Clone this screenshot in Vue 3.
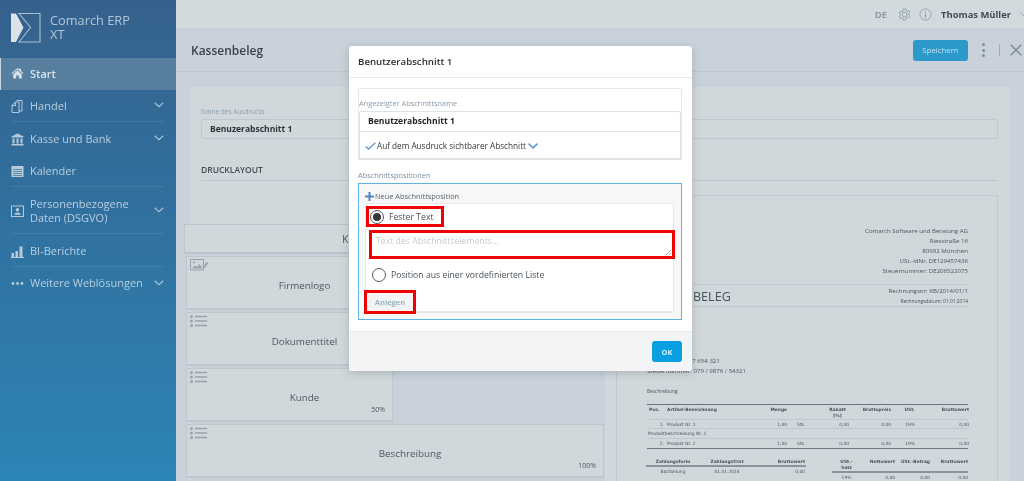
<script setup>
const nav = [
  { label: 'Handel', icon: 'copy', chev: true, h: 32 },
  { label: 'Kasse und Bank', icon: 'bank', chev: true, h: 33, low: true, nosep: true },
  { label: 'Kalender', icon: 'cal', h: 32 },
  { label: 'Personenbezogene Daten (DSGVO)', icon: 'person', chev: true, h: 47, low: true },
  { label: 'BI-Berichte', icon: 'bars', h: 33, low: true },
  { label: 'Weitere Weblösungen', icon: 'dots', chev: true, h: 33, nosep: true }
]
const blocks = [
  { t: 'Firmenlogo', icon: 'image', half: true },
  { t: 'Dokumenttitel', icon: 'list', half: true },
  { t: 'Kunde', icon: 'list', half: true, pct: '50%' },
  { t: 'Beschreibung', icon: 'list', pct: '100%' }
]
const addr = ['Comarch Software und Beratung AG', 'Riesstraße 16', '80992 München', 'USt.-IdNr. DE129457436', 'Steuernummer: DE206522075']
const buyer = ['Kunde Muster:', 'Musterort Land', 'Telefon: 0898777 654 321', 'Steuernummer: 079 / 9876 / 54321']
const head = ['Pos.', 'Artikel-Bezeichnung', 'Menge', '', 'Rabatt [%]', 'Bruttopreis', 'USt.', 'Bruttowert']
const row1 = ['1.', 'Produkt Nr. 1', '1,00', 'Stk.', '0,00', '0,00', '19%', '0,00']
const row2 = ['2.', 'Produkt Nr. 2', '1,00', 'Stk.', '0,00', '0,00', '19%', '0,00']
</script>

<template>
  <div class="app">
    <aside class="side">
      <div class="brand">
        <svg class="logo" width="30" height="30" viewBox="0 0 30 30" fill="none">
          <path d="M0 .5h5l7.500 14L5 29H0z" fill="#dbe3e8" />
          <path d="M7 .5h22V29H7M8 .5l11.500 14L8 29" stroke="#a9bfd0" stroke-width="1.100" />
        </svg>
        <div class="brand-name">Comarch ERP<br />XT</div>
      </div>
      <div class="start">
        <svg width="13" height="12" viewBox="0 0 13 12"><path d="M6.500 1 .5 6.200l.7.8L6.500 2.500 11.800 7l.7-.8L10 4V1.500H8.500v1.200zM2.200 7.200V11.500h3V8.500h2.600v3h3V7.200L6.500 3.600z" fill="#d5e0e8" /></svg>
        <span>Start</span>
      </div>
      <div v-for="n in nav" :key="n.label" class="nav" :class="{ low: n.low }" :style="{ height: n.h + 'px' }">
        <svg width="13" height="13" viewBox="0 0 13 13" fill="none" class="nav-ic">
          <g v-if="n.icon === 'copy'" stroke="#b7cbda"><path d="M1 5.500 4.500 2H8v10.500H1zM4.500 2v3.500H1" /><path d="M5.500.5H11V11H8" /></g>
          <path v-else-if="n.icon === 'bank'" d="M6.500.5.500 3.500V4.500h12V3.500zM1.500 5.500h2v5h-2zM5.500 5.500h2v5h-2zM9.500 5.500h2v5h-2zM.5 11h12v1.500H.5z" fill="#b7cbda" />
          <g v-else-if="n.icon === 'cal'"><rect x=".5" y="1" width="12" height="11" fill="#b7cbda" /><path d="M2 4.500h9M2 6.500h9M2 8.500h9M2 10.500h9" stroke="#3a6f98" stroke-width=".7" /></g>
          <g v-else-if="n.icon === 'person'"><rect x=".5" y="1" width="12" height="10.500" stroke="#b7cbda" /><circle cx="6.500" cy="4.800" r="1.700" fill="#b7cbda" /><path d="M3.500 9.800c0-3 6-3 6 0z" fill="#b7cbda" /></g>
          <path v-else-if="n.icon === 'bars'" d="M.5 8h2.500v4H.5zM4.500 6H7v6H4.500zM8.500 1.500h3v10.500h-3zM0 12h13v1H0z" fill="#b7cbda" />
          <g v-else fill="#b7cbda"><circle cx="2" cy="6.500" r="1.400" /><circle cx="6.500" cy="6.500" r="1.400" /><circle cx="11" cy="6.500" r="1.400" /></g>
        </svg>
        <span class="nav-t">{{ n.label }}</span>
        <svg v-if="n.chev" class="chev" width="10" height="6" viewBox="0 0 10 6" fill="none"><path d="M.7.8 5 4.800 9.300.8" stroke="#a9c1d3" stroke-width="1.200" /></svg>
        <i v-if="!n.nosep" class="sep"></i>
      </div>
    </aside>

    <main class="main">
      <header class="top">
        <b class="lang">DE</b>
        <svg class="gear" width="13" height="13" viewBox="0 0 14 14" fill="none" stroke="#8ea0ae"><path d="M5.800 1h2.400l.4 1.700 1.500.7 1.500-.8 1.200 2-1.300 1.200v1.600l1.300 1.200-1.200 2-1.500-.8-1.500.7L8.200 13H5.800l-.4-1.700-1.500-.7-1.500.8-1.200-2 1.300-1.200V6.600L1.200 5.400l1.200-2 1.500.8 1.500-.7z" /><circle cx="7" cy="7" r="2.600" /></svg>
        <svg class="info" width="13" height="13" viewBox="0 0 14 14" fill="none"><circle cx="7" cy="7" r="6" stroke="#8ea0ae" /><path d="M7 6v4.500M7 3.500v1.300" stroke="#8ea0ae" stroke-width="1.200" /></svg>
        <b class="user">Thomas Müller</b>
        <svg class="user-chev" width="8" height="5" viewBox="0 0 8 5" fill="none"><path d="M.5.5 4 4 7.500.5" stroke="#8ea0ae" /></svg>
      </header>
      <section class="title">
        <h1>Kassenbeleg</h1>
        <span class="save">Speichern</span>
        <span class="kebab"><i></i><i></i><i></i></span>
        <i class="vr"></i>
        <svg width="12" height="12" viewBox="0 0 12 12" fill="none"><path d="M.7.7l10.600 10.600M11.300.7.7 11.300" stroke="#7f8d98" stroke-width="1.500" /></svg>
      </section>
      <section class="card">
        <label class="lbl">Name des Ausdrucks</label>
        <div class="name">Benuzerabschnitt 1</div>
        <div class="dl">DRUCKLAYOUT</div>
        <div class="canvas">
          <div class="blocks">
            <div class="bhead">Kopf der Druckvorlage</div>
            <div class="bgrid">
              <div v-for="b in blocks" :key="b.t" class="block" :class="{ half: b.half }">
                <svg v-if="b.icon === 'image'" class="bic" width="19" height="12" viewBox="0 0 19 12" fill="none"><rect x=".5" y=".5" width="13" height="10.500" stroke="#98a4ac" /><circle cx="4" cy="3.500" r="1" fill="#98a4ac" /><path d="M2 9.500l3-3 2 1.500 2.500-3 3 4.500z" fill="#98a4ac" /><path d="M13 8l4-5 1.500 1-4 5-2 .5z" fill="#98a4ac" /></svg>
                <svg v-else class="bic" width="17" height="12" viewBox="0 0 17 12" fill="#98a4ac"><circle cx="1.500" cy="1.500" r="1.500" /><circle cx="1.500" cy="6" r="1.500" /><circle cx="1.500" cy="10.500" r="1.500" /><path d="M5 .8h12v1.400H5zM5 5.300h12v1.400H5zM5 9.800h12v1.400H5z" /></svg>
                <span>{{ b.t }}</span>
                <small v-if="b.pct">{{ b.pct }}</small>
              </div>
            </div>
          </div>
          <div class="preview">
            <div class="addr"><div v-for="a in addr" :key="a">{{ a }}</div></div>
            <div class="doc">
              <div class="doc-t">KASSENBELEG</div>
              <div class="doc-r"><div>Rechnungsnr: KB/2014/01/1</div><small>Rechnungsdatum: 01.01.2014</small></div>
            </div>
            <div class="buyer"><div v-for="b in buyer" :key="b">{{ b }}</div></div>
            <div class="besch">Beschreibung</div>
            <div class="tbl">
              <div class="tr th"><span v-for="(h, i) in head" :key="i">{{ h }}</span></div>
              <div class="tr"><span v-for="(c, i) in row1" :key="i">{{ c }}</span></div>
              <div class="tr pd">Produktbeschreibung Nr. 1</div>
              <div class="tr"><span v-for="(c, i) in row2" :key="i">{{ c }}</span></div>
            </div>
            <div class="foot">
              <div class="ft1">
                <div class="fh"><span>Zahlungsform</span><span>Zahlungsfrist</span><span>Bruttowert</span></div>
                <div class="fr"><span>Barzahlung</span><span>01.01.2014</span><span>0,00</span></div>
              </div>
              <div class="ft2">
                <div class="fh"><span>USt.-<br />Satz</span><span>Nettowert</span><span>USt.-Betrag</span><span>Bruttowert</span></div>
                <div class="fr"><span>19%</span><span>0,00</span><span>0,00</span><span>0,00</span></div>
              </div>
            </div>
          </div>
        </div>
      </section>
    </main>

    <div class="modal">
      <div class="m-head">Benutzerabschnitt 1</div>
      <div class="m-body">
        <div class="m-box">
          <div class="m-lbl">Angezeigter Abschnittsname</div>
          <div class="m-input">Benutzerabschnitt 1</div>
          <div class="m-check">
            <svg width="11" height="8" viewBox="0 0 11 8" fill="none"><path d="M.7 4.500 3.500 7 10.300.7" stroke="#5d9ad0" stroke-width="1.300" /></svg>
            <span>Auf dem Ausdruck sichtbarer Abschnitt</span>
            <svg width="10" height="6" viewBox="0 0 10 6" fill="none"><path d="M.5.7 5 4.800 9.500.7" stroke="#5d9ad0" stroke-width="1.600" /></svg>
          </div>
        </div>
        <div class="m-lbl2">Abschnittspositionen</div>
        <div class="m-pos">
          <div class="m-new">
            <svg width="9" height="9" viewBox="0 0 9 9"><path d="M3.500 0h2v3.500H9v2H5.500V9h-2V5.500H0v-2h3.500z" fill="#4f86bd" /></svg>
            <span>Neue Abschnittsposition</span>
          </div>
          <div class="m-form">
            <div class="radio-row first mark">
              <span class="radio on"></span><span>Fester Text</span>
            </div>
            <div class="area mark"><span>Text des Abschnittselements...</span>
              <svg class="grip" width="5" height="5" viewBox="0 0 5 5"><path d="M0 5 5 0M3 5l2-2" stroke="#999" stroke-width=".8" /></svg>
            </div>
            <div class="radio-row second">
              <span class="radio"></span><span>Position aus einer vordefinierten Liste</span>
            </div>
            <div class="anlegen mark">Anlegen</div>
          </div>
        </div>
      </div>
      <div class="m-foot"><span class="ok">OK</span></div>
    </div>
  </div>
</template>

<style>
html, body { margin: 0; height: 481px; overflow: hidden; background: #c9d2da; }
</style>

<style scoped>
* { box-sizing: border-box; }
.app { position: relative; display: flex; width: 1024px; height: 481px; overflow: hidden; font-family: "Open Sans", "Liberation Sans", sans-serif; color: #444; filter: blur(0.35px); }
.side { width: 176px; flex: none; height: 481px; background: linear-gradient(#35618c, #2c84b6); color: #b9cfdf; font-size: 11px; }
.brand { display: flex; height: 58px; padding: 13px 0 0 11px; gap: 9px; }
.logo { flex: none; }
.brand-name { font-size: 12.800px; line-height: 13.500px; color: #b3c6d5; margin-top: 1px; }
.start { height: 32px; display: flex; align-items: center; gap: 6px; padding: 0 0 2px 10px; background: #567e9f; border-left: 1px solid #c6d5e0; font-weight: 600; color: #d7e2ea; }
.nav { position: relative; display: flex; align-items: center; padding: 0 0 0 11px; }
.nav.low { padding-top: 1px; }
.nav-ic { flex: none; margin-right: 6px; }
.nav-t { width: 115px; line-height: 14.500px; }
.chev { position: absolute; left: 154px; top: 50%; margin-top: -4px; }
.sep { position: absolute; left: 11px; right: 12px; bottom: 0; height: 1px; background: rgba(255,255,255,.09); }
.main { flex: 1; min-width: 0; display: flex; flex-direction: column; height: 481px; background: #c9d2da; }
.top { height: 29px; flex: none; background: #d3dadd; border-bottom: 1px solid #c5ced7; display: flex; align-items: center; justify-content: flex-end; overflow: hidden; }
.lang { color: #8a9ba9; font-size: 9.500px; margin-right: 11px; }
.gear { margin-right: 8px; }
.info { margin-right: 9px; }
.user { color: #3e4a54; font-size: 9.400px; white-space: nowrap; }
.user-chev { margin: 0 -4px 0 9px; flex: none; }
.title { height: 43px; flex: none; display: flex; align-items: center; padding: 0 2px 0 15px; border-bottom: 1px solid #bcc6cd; }
h1 { margin: 0; font-size: 12px; font-weight: 600; color: #3b434a; flex: 1; }
.save { width: 55px; height: 21px; border-radius: 3px; background: #2b9acb; color: #c5e2ef; font-size: 7.800px; display: flex; align-items: center; justify-content: center; margin-right: 14px; }
.kebab { display: flex; flex-direction: column; gap: 2.500px; margin-right: 14px; }
.kebab i { width: 3px; height: 3px; border-radius: 50%; background: #7f8d98; }
.vr { width: 1px; height: 12px; background: #a0acb5; margin-right: 10px; }
.card { margin: 15px 14px 0 14px; background: #d1d8dc; flex: 1; padding: 20px 12px 0 11px; min-height: 0; }
.lbl { display: block; font-size: 6.500px; color: #8ba0b2; line-height: 9px; }
.name { height: 20px; margin-top: 3px; border: 1px solid #bec8ce; border-radius: 3px; font-size: 8.500px; font-weight: 700; color: #2d3338; line-height: 18px; padding-left: 8px; }
.dl { font-size: 8.500px; font-weight: 600; color: #444c52; margin-top: 25px; height: 17px; line-height: 12px; border-bottom: 1px solid #bcc6cc; }
.canvas { display: flex; height: 300px; margin-top: 14px; }
.blocks { width: 429px; flex: none; margin: 29px 11px 0 -25px; padding-left: 8px; background: #c9d2da; }
.bhead { height: 30px; background: #d1d8dc; border: 1px solid #bbc5cb; border-bottom-width: 2px; display: flex; align-items: center; justify-content: center; font-size: 10px; color: #4b555c; }
.bgrid { display: flex; flex-wrap: wrap; margin-top: 2px; padding-left: 2px; }
.block { position: relative; width: 418px; height: 54px; margin-bottom: 2px; background: #d1d8dc; border: 1px solid #bdc7cc; border-bottom-width: 2px; display: flex; align-items: center; justify-content: center; padding: 6px 0 0 30px; font-size: 9.800px; color: #4d575e; }
.block.half { width: 207px; flex-basis: 207px; margin-right: 212px; }
.block:nth-child(1), .block:nth-child(2) { width: 237px; flex-basis: 237px; margin-right: 182px; padding-right: 30px; }
.bic { position: absolute; left: 3px; top: 2px; }
.block small { position: absolute; right: 7px; bottom: 6px; font-size: 7px; color: #4d575e; }
.preview { flex: 1; border: 1px solid #bfc9cf; border-bottom: 0; padding: 30px 29px 0 30px; color: #4a545c; font-size: 6.100px; overflow: hidden; }
.addr { text-align: right; line-height: 10px; }
.doc { display: flex; justify-content: space-between; margin-top: 8px; border-top: 1px solid #bec8ce; border-bottom: 1px solid #bec8ce; height: 23px; align-items: center; }
.doc-t { font-size: 12.600px; line-height: 18px; margin-top: 3px; }
.doc-r { text-align: right; line-height: 10px; }
.doc-r small { font-size: 4.900px; display: block; }
.buyer { margin-top: 29px; line-height: 10px; }
.besch { font-size: 4.800px; margin-top: 11px; height: 17px; line-height: 8px; }
.tbl { border-top: 1px solid #6c7680; border-bottom: 1px solid #6c7680; font-family: "DejaVu Sans", sans-serif; font-size: 4.400px; }
.tr { display: grid; grid-template-columns: 17px 86px 37px 31px 31px 42px 24px 54px; border-bottom: 1px solid #bec8ce; height: 9px; align-items: center; }
.tr:last-child { border-bottom: 0; }
.tr.th { height: 15px; font-weight: 700; align-items: start; padding-top: 2px; line-height: 6px; }
.tr span:nth-child(1) { text-align: right; }
.tr.th span:nth-child(1) { text-align: left; padding-left: 2px; }
.tr span:nth-child(2) { padding-left: 3px; }
.tr span:nth-child(3), .tr span:nth-child(5), .tr span:nth-child(6), .tr span:nth-child(7), .tr span:nth-child(8) { text-align: right; }
.tr.th span:nth-child(5) { text-align: center; padding-left: 8px; }
.tr span:nth-child(4) { padding-left: 10px; }
.tr.pd { display: block; height: 10px; line-height: 9px; padding-left: 1px; }
.foot { display: flex; justify-content: space-between; margin-top: 10px; font-family: "DejaVu Sans", sans-serif; font-size: 4.400px; }
.ft1 { width: 160px; margin-left: -1px; }
.ft2 { width: 136px; }
.fh { display: grid; font-weight: 700; border-bottom: 2px solid #8a949c; line-height: 6px; }
.fr { display: grid; line-height: 9px; }
.ft1 .fh, .ft1 .fr { grid-template-columns: 54px 54px 52px; text-align: center; }
.ft1 span:nth-child(3) { text-align: right; padding-right: 1px; }
.ft2 .fh, .ft2 .fr { grid-template-columns: 29px 34px 35px 38px; text-align: right; }
.ft2 .fh { height: 14px; }
.ft2 .fh span:first-child, .ft2 .fr span:first-child { text-align: center; }
.modal { position: absolute; left: 349px; top: 46px; width: 343px; height: 325px; background: #fff; border-radius: 3px; display: flex; flex-direction: column; box-shadow: 0 2px 8px rgba(60,70,80,.25); z-index: 5; }
.m-head { height: 32px; flex: none; border-bottom: 1px solid #e6e8ea; font-size: 9.700px; font-weight: 600; color: #2a2f34; padding: 9px 0 0 9px; line-height: 13px; }
.m-body { flex: 1; padding: 10px 10px 0 9px; background: #fff; }
.m-box { height: 72px; border: 1px solid #e6e8ea; border-radius: 2px; }
.m-lbl { font-size: 7.400px; color: #8a9bab; line-height: 10px; padding-top: 9px; height: 22px; }
.m-input { height: 21px; border: 1px solid #dfe2e4; border-radius: 2px; font-size: 8.600px; font-weight: 700; color: #23282c; line-height: 19px; padding-left: 8px; }
.m-check { height: 28px; display: flex; align-items: center; padding: 1px 0 0 5px; gap: 1px; font-size: 8.200px; color: #333a40; border: 1px solid #dfe2e4; border-top: 0; border-bottom-width: 2px; }
.m-check span { margin-right: 1px; }
.m-lbl2 { font-size: 7.400px; color: #7d90a2; line-height: 10px; height: 23px; padding-top: 10px; }
.m-pos { height: 137px; border: 1px solid #5fb4e6; background: #f7f7f7; padding: 7px 7px 0 6px; }
.m-new { display: flex; align-items: center; gap: 1px; font-size: 7.400px; color: #57636e; height: 10px; }
.m-new svg { margin-top: 1px; }
.m-form { position: relative; margin-top: 2px; height: 110px; background: #fff; border: 1px solid #e6e8ea; border-radius: 2px; border-bottom-width: 2px; font-size: 8.700px; color: #4a5258; }
.radio-row { display: flex; align-items: center; gap: 5px; height: 20px; }
.radio { width: 14px; height: 14px; border: 1px solid #55595d; border-radius: 50%; flex: none; display: flex; align-items: center; justify-content: center; }
.radio.on::after { content: ""; width: 8px; height: 8px; border-radius: 50%; background: #33383c; }
.radio-row.first { width: 78px; height: 21px; margin: 2px 0 0 0; padding-left: 4px; }
.radio-row.second { margin-top: 6px; padding-left: 6px; }
.mark { outline: 3px solid #f00000; outline-offset: -3px; }
.area { position: relative; height: 29px; margin: 3px -1px 0 3px; width: 306px; padding: 5px 0 0 7px; color: #c6cacd; }
.grip { position: absolute; right: 4px; bottom: 4px; }
.anlegen { width: 52px; height: 24px; margin: 5px 0 0 -2px; display: flex; align-items: center; justify-content: center; font-size: 7.500px; font-weight: 700; color: #9bb3c4; background: #f4f4f4; }
.m-foot { height: 40px; flex: none; background: #f3f4f6; border-top: 1px solid #e6e8ea; display: flex; justify-content: flex-end; align-items: center; padding: 0 10px 0 0; border-radius: 0 0 3px 3px; }
.ok { width: 30px; height: 21px; background: #0a9fe0; border-radius: 3px; color: #d6eefa; font-size: 7.500px; font-weight: 700; display: flex; align-items: center; justify-content: center; }
</style>
